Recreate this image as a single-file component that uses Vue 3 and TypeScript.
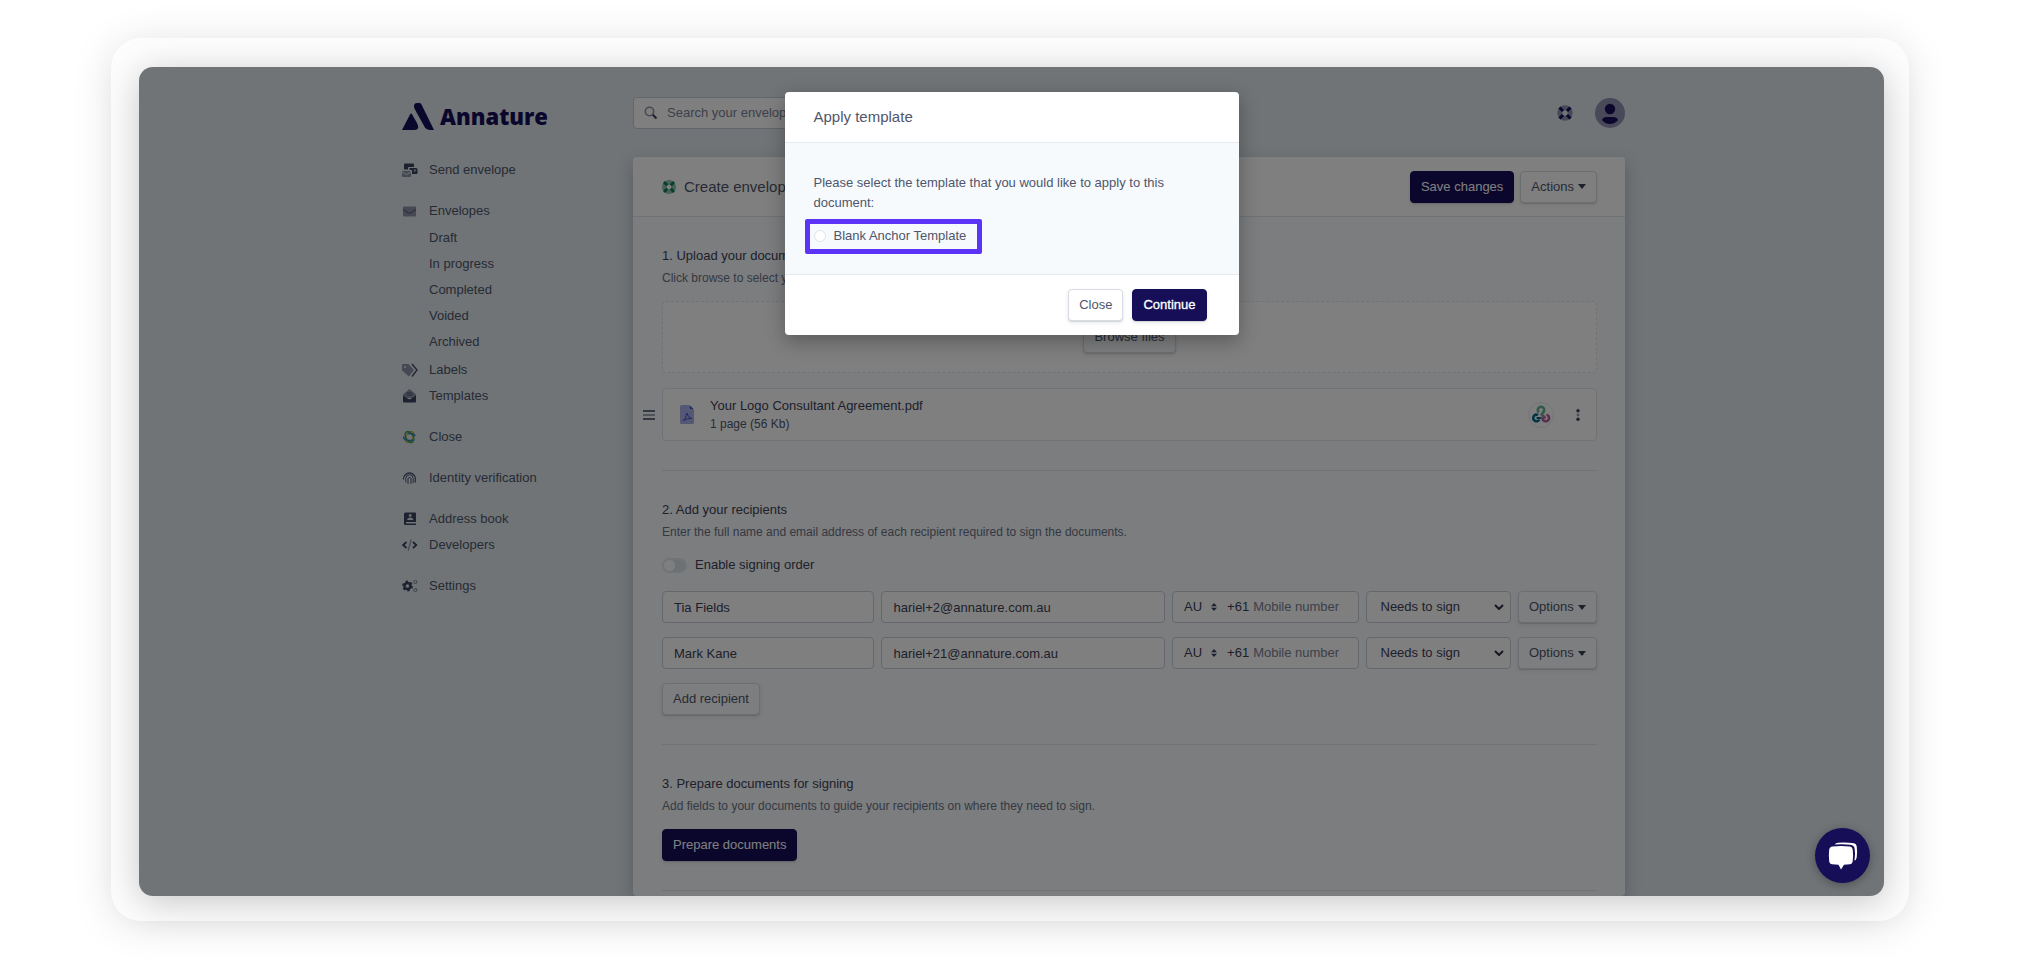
<script setup lang="ts">
import { ref } from 'vue'

interface NavItem {
  label: string
  icon: string
  children?: string[]
}

interface Recipient {
  name: string
  email: string
  country: string
  mobile: string
  role: string
}

const navGroups: NavItem[][] = [
  [{ label: 'Send envelope', icon: 'send' }],
  [
    {
      label: 'Envelopes',
      icon: 'envelope',
      children: ['Draft', 'In progress', 'Completed', 'Voided', 'Archived'],
    },
    { label: 'Labels', icon: 'tags' },
    { label: 'Templates', icon: 'template' },
  ],
  [{ label: 'Close', icon: 'close' }],
  [{ label: 'Identity verification', icon: 'fingerprint' }],
  [
    { label: 'Address book', icon: 'book' },
    { label: 'Developers', icon: 'code' },
  ],
  [{ label: 'Settings', icon: 'cogs' }],
]

const recipients = ref<Recipient[]>([
  { name: 'Tia Fields', email: 'hariel+2@annature.com.au', country: 'AU', mobile: '', role: 'sign' },
  { name: 'Mark Kane', email: 'hariel+21@annature.com.au', country: 'AU', mobile: '', role: 'sign' },
])

const search = ref('')
const signingOrder = ref(false)
const template = ref('')
</script>

<template>
  <div class="stage">
    <div class="frame">
      <div class="screen">
        <div class="app">
          <aside class="sidebar">
            <a class="brand" href="#">
              <svg class="brand-mark" viewBox="0 0 32 27" aria-hidden="true">
                <path d="M0 27 8 11.400Q9 9.500 10 11.200L15 20Q18.500 27 12.500 27Z" />
                <path d="M12.400 5.500Q10.600 0 15.500 0H17.200Q18.800 0 19.500 1.400L32 27H27.500Q24.300 27 22.800 24.300Z" />
              </svg>
              <span>Annature</span>
            </a>
            <nav class="nav">
              <ul v-for="(group, g) in navGroups" :key="g" class="nav-group">
                <li v-for="item in group" :key="item.label">
                  <a class="nav-link" href="#">
                    <svg class="nav-icon" viewBox="0 0 16 16" aria-hidden="true">
                      <g v-if="item.icon === 'send'">
                        <path d="M3 1.500h8a1 1 0 0 1 1 1V5H7a1 1 0 0 0-1 1v1.500H2v-5a1 1 0 0 1 1-1Z" />
                        <path d="M7.500 6H14a1.500 1.500 0 0 1 1.500 1.500V11a1 1 0 0 1-1 1H10V8H7.500Z" />
                        <rect x="12" y="7.500" width="1.500" height="2" fill="#d5dce2" />
                        <path class="soft" d="M0 9h9v5a1 1 0 0 1-1 1H1a1 1 0 0 1-1-1Z" />
                        <path d="m0 10 4.500 2.500L9 10" fill="none" stroke="#dfe6ea" />
                      </g>
                      <g v-else-if="item.icon === 'envelope'">
                        <rect class="soft" x="1" y="3.500" width="13" height="10" rx="1" />
                        <path d="m1 6.500 5.500 3.500q1 .5 2 0L14 6.500" fill="none" stroke="#4f5570" />
                      </g>
                      <g v-else-if="item.icon === 'tags'">
                        <path class="soft" fill-rule="evenodd" d="M0 3a1 1 0 0 1 1-1h5.500l5.500 6-5 6.500L0 8.500ZM3 4a1 1 0 1 0 .1 0Z" />
                        <path d="m10 2 5 6-5 6.500" fill="none" stroke="#3d4260" stroke-width="1.300" />
                      </g>
                      <g v-else-if="item.icon === 'template'">
                        <path class="soft" d="M1 6.500 7.500 1 14 6.500V10H1Z" />
                        <path d="M4.500 5h6M4.500 7h6" stroke="#4f5570" />
                        <path d="m1 7.500 5.500 3.500q1 .6 2 0L14 7.500v6a1 1 0 0 1-1 1H2a1 1 0 0 1-1-1Z" />
                      </g>
                      <g v-else-if="item.icon === 'close'" fill="none" stroke-width="1.500">
                        <ellipse cx="7.500" cy="8" rx="3.600" ry="5.900" stroke="#c9b73c" transform="rotate(30 7.500 8)" />
                        <ellipse cx="7.500" cy="8" rx="3.600" ry="5.900" stroke="#3579d8" transform="rotate(90 7.500 8)" stroke-dasharray="8 5" />
                        <ellipse cx="7.500" cy="8" rx="3.600" ry="5.900" stroke="#2f9e5c" transform="rotate(-30 7.500 8)" />
                      </g>
                      <g v-else-if="item.icon === 'fingerprint'" fill="none" stroke="#4f5570" stroke-linecap="round">
                        <path d="M1.500 9a6 6 0 1 1 12 0q0 1.500-.5 3" stroke-width="1.300" />
                        <path d="M3.800 12V8.500a3.700 3.700 0 0 1 7.400 0v4" />
                        <path d="M6 13.500V9a1.500 1.500 0 0 1 3 0v4.500" />
                      </g>
                      <g v-else-if="item.icon === 'book'">
                        <path d="M3.500 1.500H13a1 1 0 0 1 1 1V11H4v1.500h10V14H3.500A1.500 1.500 0 0 1 2 12.500V3a1.500 1.500 0 0 1 1.500-1.500Z" />
                        <circle cx="8.200" cy="4.500" r="1.400" fill="#d5dce2" />
                        <path d="M5.200 9q0-2.500 3-2.500t3 2.500Z" fill="#d5dce2" />
                      </g>
                      <g v-else-if="item.icon === 'code'" fill="none" stroke-width="1.800">
                        <path d="M4.500 5 1.200 8l3.300 3M11 5l3.300 3L11 11" stroke="#3d4260" />
                        <path d="m9.200 2.500-3 11" stroke="#8d93a6" stroke-width="1.200" />
                      </g>
                      <g v-else>
                        <circle cx="5.500" cy="8" r="3" fill="none" stroke="#3d4260" stroke-width="2.600" />
                        <circle cx="5.500" cy="8" r="4.600" fill="none" stroke="#3d4260" stroke-width="1.600" stroke-dasharray="2.400 2.400" />
                        <circle cx="13.300" cy="4" r="1.500" fill="none" stroke="#8d93a6" stroke-width="1.200" />
                        <circle cx="13.300" cy="12" r="1.500" fill="none" stroke="#8d93a6" stroke-width="1.200" />
                      </g>
                    </svg>
                    {{ item.label }}
                  </a>
                  <ul v-if="item.children" class="nav-children">
                    <li v-for="child in item.children" :key="child">
                      <a class="nav-link" href="#">{{ child }}</a>
                    </li>
                  </ul>
                </li>
              </ul>
            </nav>
          </aside>

          <main class="main">
            <div class="topbar">
              <label class="search">
                <svg viewBox="0 0 14 14" aria-hidden="true">
                  <circle cx="5.500" cy="5.500" r="4.200" fill="none" stroke="#8d93a6" stroke-width="1.600" />
                  <path d="m8.800 8.800 3.700 3.700" stroke="#3d4260" stroke-width="2" />
                </svg>
                <input v-model="search" type="search" placeholder="Search your envelopes" aria-label="Search your envelopes" />
              </label>
              <div class="topbar-actions">
                <button class="icon-button" type="button" aria-label="Help">
                  <svg class="buoy" viewBox="0 0 16 16">
                    <circle cx="8" cy="8" r="5.200" fill="none" stroke="#9292b4" stroke-width="5" />
                    <path d="m2.500 2.500 3.500 3.500M13.500 2.500 10 6M2.500 13.500 6 10M13.500 13.500 10 10" stroke="#160f58" stroke-width="3" />
                  </svg>
                </button>
                <button class="icon-button" type="button" aria-label="Account">
                  <svg class="avatar" viewBox="0 0 30 30">
                    <circle cx="15" cy="15" r="15" fill="#9292b4" />
                    <circle cx="15" cy="11" r="5.200" fill="#160f58" />
                    <path d="M7 22q1-3 4.500-3h7q3.500 0 4.500 3-3 4-8 4t-8-4Z" fill="#160f58" />
                  </svg>
                </button>
              </div>
            </div>

            <div class="card">
              <header class="card-header">
                <h1>
                  <svg viewBox="0 0 14 14" aria-hidden="true">
                    <circle cx="7" cy="7" r="4.600" fill="none" stroke="#8cc4ae" stroke-width="4.800" />
                    <path d="m2 2 3.200 3.200M12 2 8.800 5.200M2 12l3.200-3.200M12 12 8.800 8.800" stroke="#0f7a56" stroke-width="2.800" />
                  </svg>
                  Create envelope
                </h1>
                <div class="header-actions">
                  <button class="btn primary" type="button">Save changes</button>
                  <button class="btn" type="button">Actions<span class="caret"></span></button>
                </div>
              </header>

              <section class="section">
                <h2>1. Upload your documents</h2>
                <p>Click browse to select your documents.</p>
                <div class="dropzone">
                  <button class="btn" type="button">Browse files</button>
                </div>
                <div class="document-row">
                  <svg class="grip" viewBox="0 0 12 12" aria-hidden="true">
                    <path d="M0 2h12M0 10h12" stroke="#3d4260" stroke-width="1.600" />
                    <path d="M0 6h12" stroke="#8d93a6" stroke-width="1.600" />
                  </svg>
                  <div class="document">
                    <svg class="file" viewBox="0 0 14 19" aria-hidden="true">
                      <path d="M1.500 0H9v5h5v12.500a1.500 1.500 0 0 1-1.500 1.500h-11A1.500 1.500 0 0 1 0 17.500v-16A1.500 1.500 0 0 1 1.500 0Z" fill="#a9b1ea" />
                      <path d="M9.500 0 14 4.500H9.500Z" fill="#4651c4" />
                      <path d="M3 16q3-2 3.800-8 1.200 4.500 4.700 5.500-4-.5-8 2Z" fill="none" stroke="#4651c4" />
                    </svg>
                    <div class="document-text">
                      <strong>Your Logo Consultant Agreement.pdf</strong>
                      <span>1 page (56 Kb)</span>
                    </div>
                    <svg class="badge" viewBox="0 0 26 26" aria-hidden="true">
                      <circle cx="13" cy="13" r="12.500" fill="#fff" stroke="#e6eaf0" />
                      <g fill="none" stroke-width="2.600">
                        <circle cx="13" cy="8" r="3.200" stroke="#63b596" stroke-dasharray="16 4.100" transform="rotate(130 13 8)" />
                        <path d="m15.800 9.500-3 4" stroke="#63b596" />
                        <circle cx="8.500" cy="16" r="3.300" stroke="#0b6a86" stroke-dasharray="15 5.700" transform="rotate(30 8.500 16)" />
                        <path d="M8.500 16H13" stroke="#0b6a86" stroke-width="2" />
                        <circle cx="17.800" cy="16" r="3.300" stroke="#b0629c" stroke-dasharray="16 4.700" transform="rotate(-80 17.800 16)" />
                        <path d="m15 13 2.500 3.500" stroke="#b0629c" stroke-width="2" />
                      </g>
                    </svg>
                    <button class="icon-button kebab" type="button" aria-label="Document menu">
                      <svg viewBox="0 0 4 12">
                        <circle cx="2" cy="1.800" r="1.700" fill="#3d4260" />
                        <circle cx="2" cy="6" r="1.400" fill="#9aa0b0" />
                        <circle cx="2" cy="10.200" r="1.700" fill="#3d4260" />
                      </svg>
                    </button>
                  </div>
                </div>
              </section>

              <section class="section">
                <h2>2. Add your recipients</h2>
                <p>Enter the full name and email address of each recipient required to sign the documents.</p>
                <label class="toggle">
                  <input v-model="signingOrder" type="checkbox" />
                  Enable signing order
                </label>
                <div v-for="(person, i) in recipients" :key="i" class="recipient">
                  <input v-model="person.name" class="field" type="text" aria-label="Full name" />
                  <input v-model="person.email" class="field" type="email" aria-label="Email address" />
                  <div class="field phone">
                    <select v-model="person.country" aria-label="Country">
                      <option value="AU">AU</option>
                    </select>
                    <svg class="sort" viewBox="0 0 6 8" aria-hidden="true">
                      <path d="M0 3.200 3 0l3 3.200ZM0 4.800h6L3 8Z" fill="#3d4260" />
                    </svg>
                    <span>+61</span>
                    <input v-model="person.mobile" type="tel" placeholder="Mobile number" aria-label="Mobile number" />
                  </div>
                  <div class="field role">
                    <select v-model="person.role" aria-label="Role">
                      <option value="sign">Needs to sign</option>
                    </select>
                    <svg viewBox="0 0 10 6" aria-hidden="true">
                      <path d="m1 1 4 4 4-4" fill="none" stroke="#2b2f42" stroke-width="2" />
                    </svg>
                  </div>
                  <button class="btn" type="button">Options<span class="caret"></span></button>
                </div>
                <button class="btn" type="button">Add recipient</button>
              </section>

              <section class="section">
                <h2>3. Prepare documents for signing</h2>
                <p>Add fields to your documents to guide your recipients on where they need to sign.</p>
                <button class="btn primary" type="button">Prepare documents</button>
              </section>
            </div>
          </main>
        </div>

        <div class="overlay">
          <form class="modal" role="dialog" aria-labelledby="modal-title" @submit.prevent>
            <h2 id="modal-title" class="modal-title">Apply template</h2>
            <div class="modal-body">
              <p>Please select the template that you would like to apply to this document:</p>
              <label class="choice">
                <input v-model="template" type="radio" name="template" value="blank" />
                Blank Anchor Template
              </label>
            </div>
            <footer class="modal-footer">
              <button class="btn" type="button">Close</button>
              <button class="btn primary strong" type="submit">Continue</button>
            </footer>
          </form>
        </div>

        <button class="chat" type="button" aria-label="Open chat">
          <svg viewBox="0 0 30 28">
            <path d="M4 4.500Q13 3.500 22 4.500 24.500 5 24.700 7.500 25.500 13 24.700 19.500 24.300 22 22 22.200L16 22.700 13 27.500 10.500 22.700 4 22.200Q1.500 22 1.200 19.500.5 13 1.200 7.500 1.500 5 4 4.500Z" fill="#fff" />
            <path d="M6.500 2.500Q8 .8 10 .8 18 .3 26 1.200 28.300 1.600 28.700 4 29.500 10 28.700 15.500 28.300 18 26.500 18.500 27.500 12 26.700 7 26.200 3 22.500 2.700 15 2 6.500 2.500Z" fill="#fff" />
          </svg>
        </button>
      </div>
    </div>
  </div>
</template>

<style>
body {
  margin: 0;
  background: #fff;
}
</style>

<style scoped>
* {
  box-sizing: border-box;
}

.stage {
  display: flex;
  height: 100vh;
  padding: 38px 111px 39px;
  font-family: "Liberation Sans", Arial, sans-serif;
  font-size: 13px;
  line-height: 20px;
  color: #4f566b;
  overflow: hidden;
}

.frame {
  flex: 1;
  display: flex;
  min-width: 0;
  padding: 29px 25px 25px 28px;
  border-radius: 30px;
  background: #fdfdfd;
  box-shadow: 0 4px 40px rgba(0, 0, 0, 0.12);
}

.screen {
  position: relative;
  flex: 1;
  min-width: 0;
  border-radius: 14px;
  background: #e0e8ed;
  box-shadow: 0 6px 36px rgba(0, 0, 0, 0.22);
  overflow: hidden;
}

.app {
  display: grid;
  grid-template-columns: 231px minmax(0, 1fr);
  max-width: 1227px;
  height: 100%;
  margin: 0 auto;
  padding-left: 4px;
}

ul {
  margin: 0;
  padding: 0;
  list-style: none;
}

button,
input,
select {
  font: inherit;
  color: inherit;
}

.brand {
  display: flex;
  align-items: center;
  gap: 6px;
  height: 28px;
  margin-top: 35px;
  color: #160f58;
  font-family: "Open Sans", Inter, sans-serif;
  font-size: 22px;
  font-weight: 800;
  text-decoration: none;
}

.brand-mark {
  width: 32px;
  height: 27px;
  fill: currentColor;
}

.nav {
  display: flex;
  flex-direction: column;
  gap: 15px;
  margin-top: 27px;
}

.nav-link {
  display: flex;
  align-items: center;
  gap: 11px;
  height: 26px;
  color: #4f566b;
  text-decoration: none;
}

.nav-icon {
  width: 16px;
  height: 16px;
  fill: #3d4260;
}

.soft {
  fill: #8d93a6;
}

.nav-children {
  padding: 1px 0 2px 27px;
}

.main {
  display: flex;
  flex-direction: column;
  min-width: 0;
}

.topbar {
  display: flex;
  justify-content: space-between;
  align-items: center;
  height: 32px;
  margin: 30px 0 28px;
}

.search {
  display: flex;
  align-items: center;
  gap: 9px;
  width: 320px;
  height: 32px;
  padding: 0 10px;
  border: 1px solid #c5cad6;
  border-radius: 4px;
  background: #fff;
}

.search svg {
  width: 14px;
  height: 14px;
}

.search input {
  flex: 1;
  min-width: 0;
  padding: 0;
  border: 0;
  background: none;
}

input::placeholder {
  color: #7a8194;
  opacity: 1;
}

.topbar-actions {
  display: flex;
  align-items: center;
  gap: 22px;
}

.icon-button {
  display: flex;
  padding: 0;
  border: 0;
  background: none;
}

.buoy {
  width: 16px;
  height: 16px;
}

.avatar {
  width: 30px;
  height: 30px;
}

.card {
  flex: 1 0 auto;
  border-radius: 4px;
  background: #f8fafd;
  box-shadow: 0 6px 16px rgba(60, 66, 87, 0.3);
}

.card-header {
  display: flex;
  justify-content: space-between;
  align-items: center;
  height: 60px;
  padding: 0 28px 0 29px;
  border-bottom: 1px solid #dfe3ea;
  border-radius: 4px 4px 0 0;
  background: #fff;
}

.card-header h1 {
  display: flex;
  align-items: center;
  gap: 8px;
  margin: 0;
  font-size: 15px;
  font-weight: 400;
}

.card-header svg {
  width: 14px;
  height: 14px;
}

.header-actions {
  display: flex;
  gap: 6px;
}

.btn {
  display: inline-flex;
  align-items: center;
  justify-content: center;
  gap: 4px;
  height: 32px;
  padding: 0 10px;
  border: 1px solid #d9dde4;
  border-radius: 4px;
  background: #fff;
  box-shadow: 0 1px 1px rgba(0, 0, 0, 0.12), 0 2px 4px rgba(60, 66, 87, 0.1);
  white-space: nowrap;
}

.btn.primary {
  border-color: #160f58;
  background: #160f58;
  color: #fff;
}

.btn.strong {
  -webkit-text-stroke: 0.3px currentColor;
}

.caret {
  border: 4px solid transparent;
  border-top: 5px solid #3c4257;
  border-bottom: 0;
}

.section {
  margin: 0 28px 0 29px;
  padding: 29px 0;
  border-bottom: 1px solid #e0e4ea;
}

.section h2 {
  margin: 0;
  font-size: 13px;
  font-weight: 400;
  line-height: 20px;
  color: #3c4257;
}

.section p {
  margin: 2px 0 13px;
  font-size: 12px;
  color: #697386;
}

.section .btn:not(.primary) {
  background: #fbfcfe;
}

.dropzone {
  display: flex;
  align-items: center;
  justify-content: center;
  height: 72px;
  border: 1px dashed #e0e4ea;
  border-radius: 4px;
  background: #fff;
}

.document-row {
  display: flex;
  align-items: center;
  gap: 7px;
  margin: 15px 0 0 -19px;
}

.grip {
  width: 12px;
  height: 12px;
}

.document {
  flex: 1;
  display: flex;
  align-items: center;
  height: 53px;
  padding: 0 16px 0 17px;
  border: 1px solid #e0e4ea;
  border-radius: 4px;
  background: #fff;
}

.file {
  width: 14px;
  height: 19px;
  margin-right: 16px;
}

.document-text {
  flex: 1;
  display: flex;
  flex-direction: column;
  line-height: 18px;
}

.document-text strong {
  font-weight: 400;
  color: #3c4257;
}

.document-text span {
  font-size: 12px;
}

.badge {
  width: 26px;
  height: 26px;
}

.kebab {
  width: 4px;
  margin-left: 22px;
}

.kebab svg {
  width: 4px;
  height: 12px;
}

.toggle {
  display: flex;
  align-items: center;
  gap: 8px;
  margin-bottom: 16px;
  color: #3c4257;
}

.toggle input {
  appearance: none;
  width: 25px;
  height: 15px;
  margin: 0;
  border: 2px solid #e3e8ee;
  border-radius: 8px;
  background: #dde3e9;
}

.toggle input::before {
  content: "";
  display: block;
  width: 11px;
  height: 11px;
  border-radius: 50%;
  background: #fff;
}

.toggle input:checked::before {
  margin-left: 10px;
}

.recipient {
  display: grid;
  grid-template-columns: 212fr 283fr 186fr 145fr 79fr;
  gap: 7px;
  margin-bottom: 14px;
}

.field {
  width: 100%;
  min-width: 0;
  height: 32px;
  padding: 0 11px;
  border: 1px solid #c8d0da;
  border-radius: 4px;
  background: #fff;
  color: #3c4257;
}

.recipient .btn {
  padding: 0;
}

.phone,
.role {
  display: flex;
  align-items: center;
}

.phone select,
.role select,
.phone input {
  appearance: none;
  padding: 0;
  border: 0;
  background: none;
}

.phone select {
  width: 27px;
}

.phone span {
  margin: 0 4px 0 10px;
}

.phone input {
  flex: 1;
  min-width: 0;
}

.sort {
  width: 6px;
  height: 8px;
}

.role {
  padding: 0 6px 0 14px;
}

.role select {
  flex: 1;
  min-width: 0;
}

.role svg {
  width: 10px;
  height: 6px;
}

.overlay {
  position: absolute;
  inset: 0;
  display: flex;
  align-items: flex-start;
  justify-content: center;
  padding-top: 25px;
  background: rgba(0, 0, 0, 0.5);
}

.modal {
  width: 454px;
  border-radius: 4px;
  background: #fff;
  box-shadow: 0 6px 20px rgba(0, 0, 0, 0.3);
}

.modal-title {
  margin: 0;
  padding: 15px 29px;
  border-bottom: 1px solid #e6eaee;
  font-size: 15px;
  font-weight: 400;
  line-height: 20px;
}

.modal-body {
  padding: 30px 29px 28px;
  border-bottom: 1px solid #e6eaee;
  background: #f6fafd;
}

.modal-body p {
  margin: 0 0 13px;
}

.choice {
  position: relative;
  display: flex;
  align-items: center;
  gap: 8px;
  width: max-content;
}

.choice::after {
  content: "";
  position: absolute;
  inset: -7px -16px -8px -9px;
  border: 5px solid #5b34f8;
  border-radius: 2px;
  pointer-events: none;
}

.choice input {
  appearance: none;
  width: 12px;
  height: 12px;
  margin: 0;
  border: 1px solid #e0e3e8;
  border-radius: 50%;
  background: #fff;
}

.choice input:checked {
  border: 4px solid #160f58;
}

.modal-footer {
  display: flex;
  justify-content: flex-end;
  gap: 9px;
  padding: 14px 32px;
}

.chat {
  position: absolute;
  right: 14px;
  bottom: 13px;
  display: flex;
  align-items: center;
  justify-content: center;
  width: 55px;
  height: 55px;
  padding: 0;
  border: 0;
  border-radius: 50%;
  background: #160f58;
  box-shadow: 0 2px 10px rgba(0, 0, 0, 0.3);
}

.chat svg {
  width: 30px;
  height: 28px;
}
</style>
